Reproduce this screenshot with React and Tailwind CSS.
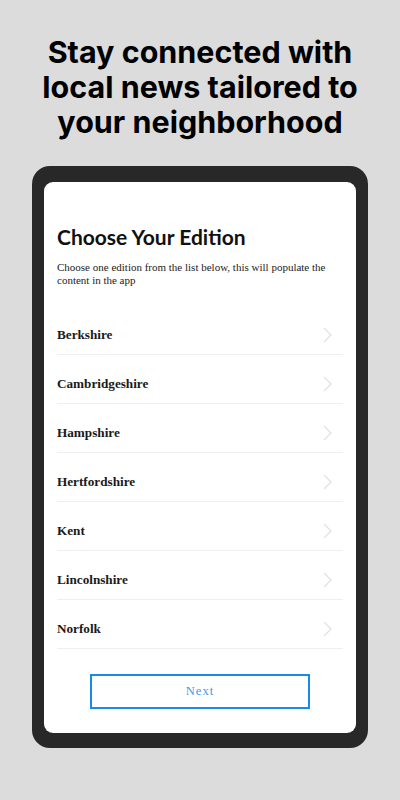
import React from 'react';

const editions = [
  'Berkshire',
  'Cambridgeshire',
  'Hampshire',
  'Hertfordshire',
  'Kent',
  'Lincolnshire',
  'Norfolk',
];

const Chevron = () => (
  <svg width="10" height="16" viewBox="0 0 10 16" fill="none">
    <path d="M1.5 1.5 L8 8 L1.5 14.5" stroke="#e2e2e2" strokeWidth="1.4" strokeLinecap="round" strokeLinejoin="round" />
  </svg>
);

const App = () => {
  return (
    <div className="min-h-[800px] w-[400px] bg-[#dcdcdc] overflow-hidden">
      {/* Headline */}
      <h1
        className="pt-[34px] text-center text-[30.5px] leading-[35px] font-bold text-black"
        style={{ fontFamily: 'Inter, "Noto Sans", sans-serif' }}
      >
        Stay connected with
        <br />
        local news tailored to
        <br />
        your neighborhood
      </h1>

      {/* Device frame */}
      <div className="mt-[27px] mx-[32px] rounded-[18px] bg-[#282828] pt-[16px] px-[12px] pb-[15px]">
        <div className="h-[551px] rounded-[9px] bg-white px-[13px] pt-[43px]">
          <h2
            className="text-[21px] leading-[24px] font-bold text-[#111]"
            style={{ fontFamily: 'Lato, "Open Sans", sans-serif' }}
          >
            Choose Your Edition
          </h2>
          <p
            className="mt-[12px] text-[11px] leading-[13px] text-[#222]"
            style={{ fontFamily: '"Liberation Serif", serif' }}
          >
            Choose one edition from the list below, this will populate the content in the app
          </p>

          <ul className="mt-[19px]">
            {editions.map((name) => (
              <li
                key={name}
                className="flex h-[49px] items-center justify-between border-b border-[#efefef] pt-[9px] pr-[10px]"
              >
                <span
                  className="text-[13.2px] font-bold text-[#1a1a1a]"
                  style={{ fontFamily: '"Liberation Serif", serif' }}
                >
                  {name}
                </span>
                <Chevron />
              </li>
            ))}
          </ul>

          <div className="mt-[25px] flex justify-center">
            <button
              className="h-[35px] w-[220px] border-2 border-[#1a8ae6] text-[12.5px] text-[#3b9cec] tracking-[1px]"
              style={{ fontFamily: '"Liberation Serif", serif' }}
            >
              Next
            </button>
          </div>
        </div>
      </div>
    </div>
  );
};

export default App;
